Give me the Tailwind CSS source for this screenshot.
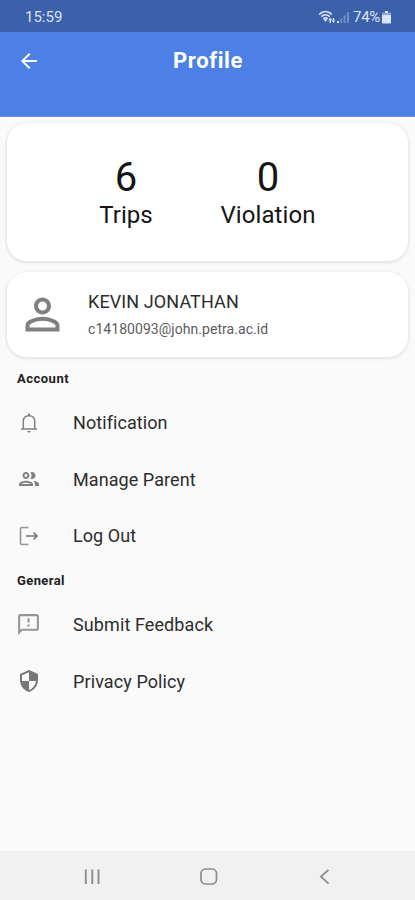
<!DOCTYPE html>
<html lang="en">

<head>
    <meta charset="UTF-8">
    <meta name="viewport" content="width=device-width, initial-scale=1.0">
    <title>Profile</title>
    <script src="https://cdn.jsdelivr.net/npm/@tailwindcss/browser@4"></script>
</head>

<body class="bg-[#fafafa] font-['Roboto',sans-serif] text-[#2c2c2c]">
    <div class="flex flex-col w-full h-[900px] overflow-hidden">
        <!-- Status bar -->
        <div class="h-8 shrink-0 bg-[#3a61aa] flex items-center justify-between pl-[25px] pr-[24px] pt-0.5 text-[#d9e4f6]">
            <span class="text-[15px] leading-none">15:59</span>
            <div class="flex items-center">
                <svg class="w-[18px] h-[15px]" viewBox="0 0 18 15" fill="none" stroke="currentColor">
                    <path d="M1.2 4.3C5 .8 10 .8 13.8 4.3M3.3 6.6c2.5-2.3 6-2.3 8.4 0M5.4 8.8c1.4-1.1 2.8-1.1 4.2 0" stroke-width="1.7" />
                    <path d="M5.5 9.3h4L7.5 12z" fill="currentColor" stroke="none" />
                    <path d="M12.2 7.5l2 2.8h-1.3V13h-1.4v-2.7h-1.3zM15.5 13l-1.8-2.5h1.1V8h1.4v2.5h1.1z" fill="currentColor" stroke="none" />
                </svg>
                <svg class="w-[14px] h-[13px] mr-[3px]" viewBox="0 0 14 13" fill="currentColor">
                    <path d="M1 10h2v2H1z" />
                    <path d="M4.3 7.5h2V12h-2zM7.6 4.5h2V12h-2zM11 1h2v11h-2z" opacity=".35" />
                </svg>
                <span class="text-[15px] leading-none tracking-[-0.3px]">74%</span>
                <svg class="w-[9px] h-[13px] ml-0.5" viewBox="0 0 9 13" fill="currentColor">
                    <path d="M3 0h3v1.8h2.2a.8.8 0 0 1 .8.8v9.1a.8.8 0 0 1-.8.8H.8a.8.8 0 0 1-.8-.8V2.6a.8.8 0 0 1 .8-.8H3z" />
                    <path d="M0 2h9v2H0z" fill="#8ca7d6" />
                </svg>
            </div>
        </div>

        <!-- App bar -->
        <header class="h-[85px] shrink-0 bg-[#4c80e4] border-b border-[#648fe0] grid grid-cols-[56px_1fr_56px] items-start text-white">
            <svg class="w-6 h-6 ml-[17px] mt-[17px]" viewBox="0 0 24 24" fill="currentColor">
                <path d="M20 11H7.83l5.59-5.59L12 4l-8 8 8 8 1.41-1.41L7.83 13H20v-2z" />
            </svg>
            <h1 class="text-center text-[22px] leading-7 font-bold tracking-[0.6px] mt-[15px] pl-px">Profile</h1>
        </header>

        <main class="flex-1 px-[7px] pt-1.5">
            <!-- Trip statistics -->
            <section class="h-[138px] rounded-[20px] bg-white shadow-[0_1px_3px_1px_#dfe3e2] flex text-[#161616]">
                <div class="ml-[79px] w-20 pt-8 text-center">
                    <p class="text-[40px] leading-[46px]">6</p>
                    <p class="text-2xl leading-8 -mt-0.5">Trips</p>
                </div>
                <div class="ml-[42px] w-[120px] pt-8 text-center">
                    <p class="text-[40px] leading-[46px]">0</p>
                    <p class="text-2xl leading-8 -mt-0.5 tracking-[0.1px]">Violation</p>
                </div>
            </section>

            <!-- User card -->
            <section class="mt-[11px] h-[85px] rounded-[20px] bg-white shadow-[0_1px_3px_1px_#dfe5e3] flex items-center">
                <svg class="w-[51px] h-[51px] ml-[10px] text-[#808080]" viewBox="0 0 24 24" fill="currentColor">
                    <path d="M12 5.9a2.1 2.1 0 1 1 0 4.2 2.1 2.1 0 0 1 0-4.2m0 9c2.97 0 6.1 1.46 6.1 2.1v1.1H5.9V17c0-.64 3.13-2.1 6.1-2.1M12 4C9.79 4 8 5.79 8 8s1.79 4 4 4 4-1.79 4-4-1.79-4-4-4zm0 9c-2.67 0-8 1.34-8 4v3h16v-3c0-2.66-5.33-4-8-4z" />
                </svg>
                <div class="ml-5">
                    <p class="text-[18px] leading-6 tracking-[0.1px]">KEVIN JONATHAN</p>
                    <p class="text-sm leading-5 mt-[5px] tracking-[0.05px] text-[#5c5c5c]">c14180093@john.petra.ac.id</p>
                </div>
            </section>

            <!-- Account -->
            <h2 class="mt-[13px] ml-[10px] h-[24.5px] text-[13px] leading-[18px] font-bold tracking-[0.5px] text-[#222222]">Account</h2>
            <ul class="text-[18px] tracking-[0.07px]">
                <li class="h-14 flex items-center pl-[10px]">
                    <svg class="w-6 h-6 mr-8 text-[#808080]" viewBox="0 0 24 24" fill="none" stroke="currentColor" stroke-width="1.5">
                        <path d="M4 18h16M6.3 17.7V10.5C6.3 7 8.6 4.7 12 4.7s5.7 2.3 5.7 5.8v7.2" />
                        <path d="M11 2.5h2V5h-2zM10.3 20h3.4c-.2 1-.8 1.6-1.7 1.6s-1.5-.6-1.7-1.6z" fill="currentColor" stroke="none" />
                    </svg>
                    <span>Notification</span>
                </li>
                <li class="h-[57px] flex items-center pl-[10px]">
                    <svg class="w-6 h-6 mr-8 text-[#828282]" viewBox="0 0 24 24" fill="currentColor">
                        <path d="M9 13.75c-2.34 0-7 1.17-7 3.5V19h14v-1.75c0-2.33-4.66-3.5-7-3.5zM4.34 17c.84-.58 2.87-1.25 4.66-1.25s3.82.67 4.66 1.25H4.34zM9 12c1.93 0 3.5-1.57 3.5-3.5S10.93 5 9 5 5.5 6.57 5.5 8.5 7.07 12 9 12zm0-5c.83 0 1.5.67 1.5 1.5S9.83 10 9 10s-1.5-.67-1.5-1.5S8.17 7 9 7zm7.04 6.81c1.16.84 1.96 1.96 1.96 3.44V19h4v-1.75c0-2.02-3.5-3.17-5.96-3.44zM15 12c1.93 0 3.5-1.57 3.5-3.5S16.93 5 15 5c-.54 0-1.04.13-1.5.35.63.89 1 1.98 1 3.15s-.37 2.26-1 3.15c.46.22.96.35 1.5.35z" />
                    </svg>
                    <span>Manage Parent</span>
                </li>
                <li class="h-14 flex items-center pl-[10px]">
                    <svg class="w-6 h-6 mr-8 text-[#777777]" viewBox="0 0 24 24" fill="none" stroke="currentColor" stroke-width="1.7">
                        <path d="M11.5 3.5H5A1.5 1.5 0 0 0 3.5 5v14A1.5 1.5 0 0 0 5 20.5h6.5" stroke="#999999" />
                        <path d="M9 12h11M16.5 8.5L20 12l-3.5 3.5" />
                    </svg>
                    <span>Log Out</span>
                </li>
            </ul>

            <!-- General -->
            <h2 class="mt-2 ml-[10px] h-[25px] text-[13px] leading-[18px] font-bold tracking-[0.4px] text-[#222222]">General</h2>
            <ul class="text-[18px] tracking-[0.1px]">
                <li class="h-[56.5px] flex items-center pl-[9px]">
                    <svg class="w-[25px] h-[25px] mr-8 text-[#969696]" viewBox="0 0 24 24" fill="currentColor">
                        <path d="M20 2H4c-1.1 0-1.99.9-1.99 2L2 22l4-4h14c1.1 0 2-.9 2-2V4c0-1.1-.9-2-2-2zm0 14H5.17L4 17.17V4h16v12zM11 12h2v2h-2zm0-6h2v4h-2z" />
                    </svg>
                    <span>Submit Feedback</span>
                </li>
                <li class="h-[56.5px] flex items-center pl-[10px]">
                    <svg class="w-6 h-6 mr-8 text-[#777777]" viewBox="0 0 24 24" fill="currentColor">
                        <path d="M12 1L3 5v6c0 5.55 3.84 10.74 9 12 5.16-1.26 9-6.45 9-12V5l-9-4zm0 10.99h7c-.53 4.12-3.28 7.79-7 8.94V12H5V6.3l7-3.11v8.8z" />
                    </svg>
                    <span>Privacy Policy</span>
                </li>
            </ul>
        </main>

        <!-- System navigation -->
        <nav class="h-[49px] shrink-0 bg-[#f1f1f1] flex items-center justify-between pl-[81px] pr-[79px] pt-0.5 text-[#8c8c8c]">
            <svg class="w-6 h-6" viewBox="0 0 24 24" fill="none" stroke="currentColor" stroke-width="1.9">
                <path d="M4.8 4.5V19M11.3 4.5V19M17.5 4.5V19" />
            </svg>
            <svg class="w-6 h-6" viewBox="0 0 24 24" fill="none" stroke="currentColor" stroke-width="1.7">
                <rect x="4" y="4" width="15.5" height="15" rx="4.5" />
            </svg>
            <svg class="w-6 h-6" viewBox="0 0 24 24" fill="none" stroke="currentColor" stroke-width="1.8">
                <path d="M16.5 4.8L9 11.6l7.5 7" />
            </svg>
        </nav>
    </div>
</body>

</html>
